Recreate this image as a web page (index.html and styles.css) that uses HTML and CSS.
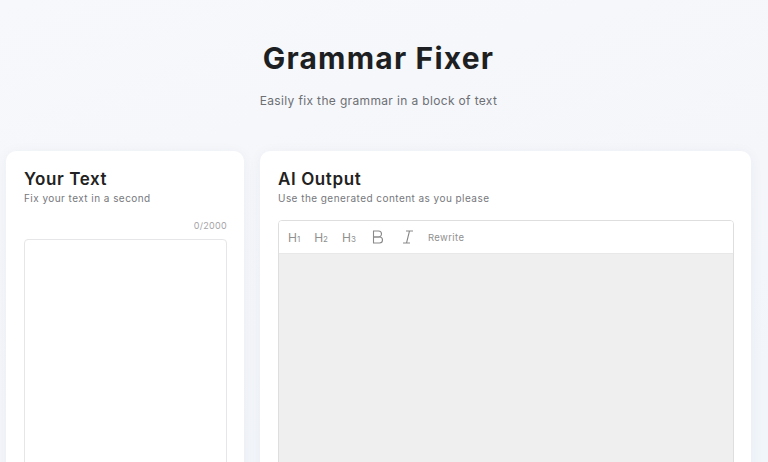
FILE: index.html
```html
<!DOCTYPE html>
<html lang="en">
<head>
    <meta charset="utf-8">
    <meta name="viewport" content="width=device-width, initial-scale=1.0">
    <title>Grammar Fixer</title>
    <link rel="stylesheet" href="styles.css">
</head>

<body>
    <header class="hero">
        <h1>Grammar Fixer</h1>
        <p>Easily fix the grammar in a block of text</p>
    </header>

    <main class="panels">
        <section class="card card-input">
            <h2>Your Text</h2>
            <p class="sub">Fix your text in a second</p>
            <div class="counter">0/2000</div>
            <textarea class="input-box"></textarea>
        </section>

        <section class="card card-output">
            <h2>AI Output</h2>
            <p class="sub">Use the generated content as you please</p>
            <div class="editor">
                <div class="toolbar">
                    <span class="tool">H<small>1</small></span>
                    <span class="tool">H<small>2</small></span>
                    <span class="tool">H<small>3</small></span>
                    <span class="tool icon">
                        <svg width="12" height="14" viewBox="0 0 12 14" fill="none" stroke="#8a8a8a" stroke-width="1.1">
                            <path d="M1.5 1h5a3 3 0 0 1 0 6h-5z"/>
                            <path d="M1.5 7h6a3 3 0 0 1 0 6h-6z"/>
                        </svg>
                    </span>
                    <span class="tool icon">
                        <svg width="12" height="14" viewBox="0 0 12 14" fill="none" stroke="#8a8a8a" stroke-width="1.1">
                            <path d="M4 1h7M1 13h7M7.5 1L4.5 13"/>
                        </svg>
                    </span>
                    <span class="tool rewrite">Rewrite</span>
                </div>
                <div class="editor-body"></div>
            </div>
        </section>
    </main>
</body>
</html>
```

FILE: styles.css
```css
* {
    box-sizing: border-box;
}

body {
    margin: 0;
    height: 462px;
    overflow: hidden;
    font-family: "Inter", "Open Sans", sans-serif;
    color: #1c1c1e;
    background: linear-gradient(160deg, #f7f8fb 0%, #f4f6fa 60%, #f1f6fb 100%);
}

.hero {
    padding: 40px 17px 0 6px;
    text-align: center;
}

.hero h1 {
    margin: 0;
    font-size: 30px;
    font-weight: 700;
    letter-spacing: 1.2px;
    color: #1d1f22;
}

.hero p {
    margin: 17px 0 0;
    font-size: 12px;
    letter-spacing: 0.35px;
    color: #6d6f75;
}

.panels {
    display: grid;
    grid-template-columns: 238px 1fr;
    gap: 16px;
    padding: 43px 17px 0 6px;
}

.card {
    background: #fff;
    border-radius: 10px;
    box-shadow: 0 2px 14px rgba(40, 60, 90, 0.05);
    padding: 18px 17px 0 18px;
    height: 340px;
}

.card h2 {
    margin: 0;
    font-size: 17px;
    font-weight: 600;
    letter-spacing: 0.6px;
    color: #222;
}

.card .sub {
    margin: 3px 0 0;
    font-size: 10px;
    letter-spacing: 0.45px;
    color: #76787d;
}

.counter {
    text-align: right;
    font-size: 9px;
    letter-spacing: 0.3px;
    color: #a4a4a8;
    margin-top: 16px;
}

.input-box {
    display: block;
    width: 100%;
    height: 260px;
    margin-top: 8px;
    border: 1px solid #e6e6e8;
    border-radius: 4px;
    resize: none;
    background: #fff;
}

.editor {
    margin-top: 16px;
    border: 1px solid #dedede;
    border-radius: 4px;
    overflow: hidden;
}

.toolbar {
    display: flex;
    align-items: center;
    gap: 14px;
    height: 33px;
    padding: 0 9px;
    background: #fff;
    border-bottom: 1px solid #e8e8e8;
}

.tool {
    font-size: 12px;
    color: #909090;
}

.tool small {
    font-size: 8px;
}

.tool.icon {
    display: flex;
    padding: 0 2px;
}

.rewrite {
    font-size: 9.5px;
    letter-spacing: 0.4px;
    margin-left: -2px;
}

.editor-body {
    height: 260px;
    background: #efefef;
}
```
